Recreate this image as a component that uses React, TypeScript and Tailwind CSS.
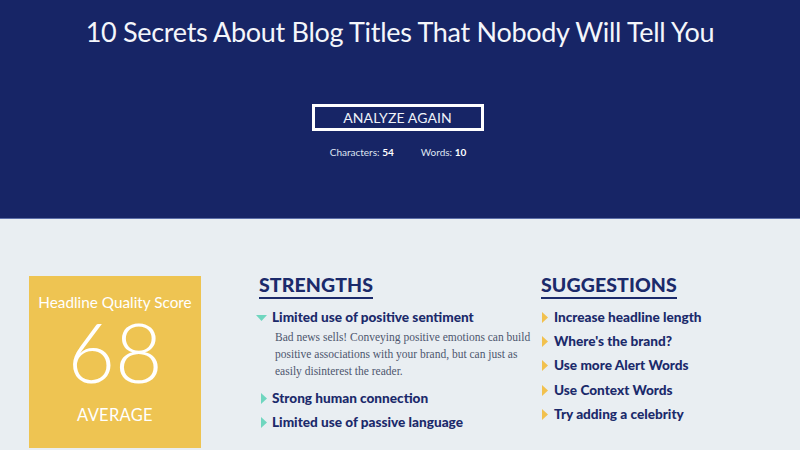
import { useState } from 'react'

type Item = { label: string; detail?: string }

const strengths: Item[] = [
  {
    label: 'Limited use of positive sentiment',
    detail:
      'Bad news sells! Conveying positive emotions can build positive associations with your brand, but can just as easily disinterest the reader.',
  },
  { label: 'Strong human connection' },
  { label: 'Limited use of passive language' },
]

const suggestions: Item[] = [
  { label: 'Increase headline length' },
  { label: "Where's the brand?" },
  { label: 'Use more Alert Words' },
  { label: 'Use Context Words' },
  { label: 'Try adding a celebrity' },
]

function Caret({ open, color }: { open: boolean; color: string }) {
  if (open) {
    return (
      <svg width="11" height="6" viewBox="0 0 11 6" className="shrink-0" style={{ color }}>
        <path d="M0 0 L11 0 L5.5 6 Z" fill="currentColor" />
      </svg>
    )
  }
  return (
    <svg width="6" height="11" viewBox="0 0 6 11" className="shrink-0" style={{ color }}>
      <path d="M0 0 L6 5.5 L0 11 Z" fill="currentColor" />
    </svg>
  )
}

function SectionHeading({ children }: { children: string }) {
  return (
    <h2 className="inline-block border-b-[2px] border-[#1b2a6b] pb-[2px] font-['Lato',sans-serif] text-[19.5px] font-black leading-[20px] tracking-[0.1px] text-[#1b2a6b]">
      {children}
    </h2>
  )
}

export default function App() {
  const [openIndex, setOpenIndex] = useState(0)

  return (
    <div className="h-[450px] w-[800px] overflow-hidden bg-[#e9eef2] font-['Lato',sans-serif]">
      {/* Headline + analyze button */}
      <header className="flex h-[219px] flex-col items-center border-b border-[#5d6fa8] bg-[#172566] pt-[14px] text-white">
        <h1 className="font-['Lato',sans-serif] text-[27px] font-normal leading-[36px] tracking-[-0.3px] text-[#f4f6fb]">
          10 Secrets About Blog Titles That Nobody Will Tell You
        </h1>
        <button className="mr-[5px] mt-[54px] h-[27px] w-[172px] border-[3px] border-white text-[14px] font-normal leading-none tracking-[0.1px] text-[#eef1f8]">
          ANALYZE AGAIN
        </button>
        <div className="mr-[4px] mt-[15px] flex gap-[27px] text-[10px] leading-[12px] text-[#dfe4f1]">
          <span>
            Characters: <b className="font-bold text-white">54</b>
          </span>
          <span>
            Words: <b className="font-bold text-white">10</b>
          </span>
        </div>
      </header>

      <main className="flex pl-[29px] pt-[57px]">
        {/* Score card */}
        <div className="flex h-[172px] w-[172px] shrink-0 flex-col items-center bg-[#eec452] text-white">
          <div className="mt-[17px] text-[15.3px] font-normal leading-[18px]">Headline Quality Score</div>
          <div className="mt-[7px] text-[82px] font-light leading-[66px]">68</div>
          <div className="mt-[21px] text-[16.5px] leading-[20px] tracking-[0.3px]">AVERAGE</div>
        </div>

        {/* Strengths */}
        <section className="-mt-[2px] ml-[55px] w-[284px]">
          <div className="pl-[3px]">
            <SectionHeading>STRENGTHS</SectionHeading>
          </div>
          <ul className="mt-[10px] flex flex-col">
            {strengths.map((s, i) => (
              <li key={s.label} className="mb-[7px]">
                <button
                  onClick={() => setOpenIndex(openIndex === i ? -1 : i)}
                  className="flex items-center text-left"
                >
                  <span className="flex w-[16px] justify-start">
                    <span className={openIndex === i ? 'pl-0' : 'pl-[5px]'}>
                      <Caret open={openIndex === i} color="#6fd6bf" />
                    </span>
                  </span>
                  <span className="text-[13.6px] font-black leading-[17px] text-[#1b2a6b]">{s.label}</span>
                </button>
                {openIndex === i && s.detail && (
                  <p className="mb-[3px] mt-[3px] pl-[19px] pr-[4px] font-['Liberation_Serif',serif] text-[11.5px] leading-[17px] text-[#4d566e]">
                    {s.detail}
                  </p>
                )}
              </li>
            ))}
          </ul>
        </section>

        {/* Suggestions */}
        <section className="-mt-[2px] ml-[1px]">
          <SectionHeading>SUGGESTIONS</SectionHeading>
          <ul className="mt-[10px] flex flex-col gap-[7.2px]">
            {suggestions.map((s) => (
              <li key={s.label} className="flex items-center">
                <span className="flex w-[13px] pl-[1px]">
                  <Caret open={false} color="#f2c14e" />
                </span>
                <span className="text-[13.6px] font-black leading-[17px] text-[#1b2a6b]">{s.label}</span>
              </li>
            ))}
          </ul>
        </section>
      </main>
    </div>
  )
}
